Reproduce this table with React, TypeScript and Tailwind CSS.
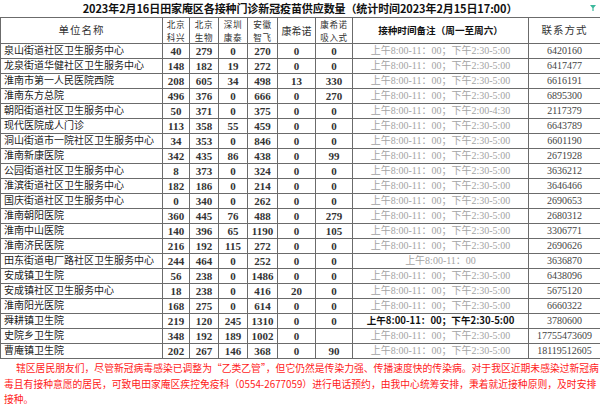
import React from 'react';

type Row = {
  name: string;
  nums: string[];
  time: 'std' | 'early' | 'am' | 'bold';
  phone: string;
};

const rows: Row[] = [
  { name: '泉山街道社区卫生服务中心', nums: ['40', '279', '0', '270', '0', '0'], time: 'std', phone: '6420160' },
  { name: '龙泉街道华健社区卫生服务中心', nums: ['148', '182', '19', '272', '0', '0'], time: 'std', phone: '6417477' },
  { name: '淮南市第一人民医院西院', nums: ['208', '605', '34', '498', '13', '330'], time: 'std', phone: '6616191' },
  { name: '淮南东方总院', nums: ['496', '376', '0', '666', '0', '270'], time: 'std', phone: '6895300' },
  { name: '朝阳街道社区卫生服务中心', nums: ['50', '371', '0', '375', '0', '0'], time: 'early', phone: '2117379' },
  { name: '现代医院成人门诊', nums: ['113', '358', '55', '459', '0', '0'], time: 'std', phone: '6643789' },
  { name: '洞山街道市一院社区卫生服务中心', nums: ['34', '353', '0', '846', '0', '0'], time: 'std', phone: '6601190' },
  { name: '淮南新康医院', nums: ['342', '435', '86', '438', '0', '99'], time: 'std', phone: '2671928' },
  { name: '公园街道社区卫生服务中心', nums: ['8', '373', '0', '324', '0', '0'], time: 'std', phone: '3636212' },
  { name: '淮滨街道社区卫生服务中心', nums: ['182', '186', '0', '214', '0', '0'], time: 'std', phone: '3646466' },
  { name: '国庆街道社区卫生服务中心', nums: ['0', '340', '0', '262', '0', '0'], time: 'std', phone: '2690653' },
  { name: '淮南朝阳医院', nums: ['360', '445', '76', '488', '0', '279'], time: 'std', phone: '2680312' },
  { name: '淮南中山医院', nums: ['140', '396', '65', '1190', '0', '105'], time: 'std', phone: '3306771' },
  { name: '淮南济民医院', nums: ['216', '192', '115', '272', '0', '0'], time: 'std', phone: '2690626' },
  { name: '田东街道电厂路社区卫生服务中心', nums: ['244', '464', '0', '252', '0', '0'], time: 'am', phone: '3636870' },
  { name: '安成镇卫生院', nums: ['56', '238', '0', '1486', '0', '0'], time: 'std', phone: '6438096' },
  { name: '安成镇社区卫生服务中心', nums: ['18', '238', '0', '416', '20', '0'], time: 'std', phone: '5675120' },
  { name: '淮南阳光医院', nums: ['168', '275', '0', '614', '0', '0'], time: 'std', phone: '6660322' },
  { name: '舜耕镇卫生院', nums: ['219', '120', '245', '1310', '0', '0'], time: 'bold', phone: '3780600' },
  { name: '史院乡卫生院', nums: ['348', '192', '189', '1002', '0', ''], time: 'std', phone: '17755473609' },
  { name: '曹庵镇卫生院', nums: ['202', '267', '146', '368', '0', '90'], time: 'std', phone: '18119512605' },
];

const timeText = {
  std: '上午8:00-11：00；下午2:30-5:00',
  early: '上午8:00-11：00；下午2:00-4:30',
  am: '上午8:00-11：00',
  bold: '上午8:00-11：00；下午2:30-5:00',
};

const cell = 'border border-[#6b6b6b] p-0 leading-none';
const serif = "font-['Liberation_Serif','Noto_Sans_CJK_SC',serif]";
const sans = "font-['Noto_Sans_CJK_SC','Liberation_Sans',sans-serif]";

function StackHead({ top, bottom }: { top: string; bottom: string }) {
  return (
    <th className={`${cell} ${sans} font-normal text-[8.6px] text-[#333] tracking-[0.6px]`}>
      <div className="flex flex-col items-center">
        <span className="block leading-[12.5px] h-[12.5px]">{top}</span>
        <span className="block leading-[12.5px] h-[12.5px]">{bottom}</span>
      </div>
    </th>
  );
}

export default function App() {
  return (
    <div className={`w-[600px] h-[408px] bg-white overflow-hidden flex flex-col ${sans}`}>
      {/* 标题 */}
      <div className="h-[17px] flex items-center justify-center relative shrink-0">
        <h1 className="text-[11px] font-bold text-[#111] leading-none tracking-[-0.1px]">
          2023年2月16日田家庵区各接种门诊新冠疫苗供应数量（统计时间2023年2月15日17:00）
        </h1>
        <svg className="absolute right-[4px] top-[5px] w-[6px] h-[6px]" viewBox="0 0 6 6">
          <path d="M0 0h6L3.6 3v3H2.4V3z" fill="#3bb89c" />
        </svg>
      </div>

      <table className="w-[600px] table-fixed border-collapse shrink-0">
        <colgroup>
          <col className="w-[162px]" />
          <col className="w-[27px]" />
          <col className="w-[29px]" />
          <col className="w-[29px]" />
          <col className="w-[30px]" />
          <col className="w-[38px]" />
          <col className="w-[37px]" />
          <col className="w-[176px]" />
          <col className="w-[72px]" />
        </colgroup>
        <thead>
          <tr className="h-[26px]">
            <th className={`${cell} font-normal text-[10.5px] text-[#333] tracking-[1px]`}>单位名称</th>
            <StackHead top="北京" bottom="科兴" />
            <StackHead top="北京" bottom="生物" />
            <StackHead top="深圳" bottom="康泰" />
            <StackHead top="安徽" bottom="智飞" />
            <th className={`${cell} font-normal text-[10px] text-[#333]`}>康希诺</th>
            <StackHead top="康希诺" bottom="吸入式" />
            <th className={`${cell} font-bold text-[9.6px] text-[#111]`}>接种时间备注（周一至周六）</th>
            <th className={`${cell} font-normal text-[10.5px] text-[#333] tracking-[1px]`}>联系方式</th>
          </tr>
        </thead>
        <tbody>
          {rows.map((r) => (
            <tr key={r.name} className="h-[15px]">
              <td className={`${cell} ${serif} text-[10px] text-[#222] pl-[3px] whitespace-nowrap`}>{r.name}</td>
              {r.nums.map((n, i) => (
                <td key={i} className={`${cell} ${serif} text-[11px] font-bold text-[#333] text-center`}>
                  {n}
                </td>
              ))}
              <td
                className={
                  r.time === 'bold'
                    ? `${cell} ${sans} text-[9.6px] font-bold text-[#111] text-center whitespace-nowrap`
                    : `${cell} ${serif} text-[10px] text-[#a3a3a3] text-center whitespace-nowrap`
                }
              >
                {timeText[r.time]}
              </td>
              <td className={`${cell} ${serif} text-[10px] text-[#444] text-center`}>{r.phone}</td>
            </tr>
          ))}
        </tbody>
      </table>

      {/* 提示 */}
      <div className="flex-1 px-[4px] pt-[2px] text-[9.8px] leading-[15.5px] text-[#ff1a1a] whitespace-nowrap">
        <p className="indent-[12px]">
          辖区居民朋友们，尽管新冠病毒感染已调整为“乙类乙管”，但它仍然是传染力强、传播速度快的传染病。对于我区近期未感染过新冠病
        </p>
        <p>毒且有接种意愿的居民，可致电田家庵区疾控免疫科（0554-2677059）进行电话预约，由我中心统筹安排，秉着就近接种原则，及时安排</p>
        <p>接种。</p>
      </div>
      <div className="h-[3px] shrink-0 bg-[#c9f1e4] border-t border-[#9edfc9]" />
    </div>
  );
}
